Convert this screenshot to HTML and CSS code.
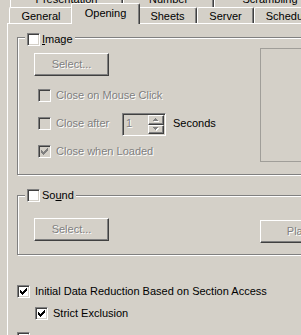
FILE: index.html
```html
<!DOCTYPE html>
<html>
<head>
<meta charset="utf-8">
<title>Document Properties</title>
<link rel="stylesheet" href="styles.css">
</head>
<body>
<div class="dialog">
  <div class="tabs tabs-back">
    <div class="tab tab-presentation">Presentation</div>
    <div class="tab tab-number">Number</div>
    <div class="tab tab-scrambling">Scrambling</div>
  </div>
  <div class="tabs tabs-front">
    <div class="tab tab-general">General</div>
    <div class="tab tab-opening selected">Opening</div>
    <div class="tab tab-sheets">Sheets</div>
    <div class="tab tab-server">Server</div>
    <div class="tab tab-scheduler">Scheduler</div>
  </div>
  <div class="panel">
    <fieldset class="group group-image">
      <legend class="group-title title-low"><span class="cb"></span><span class="title-text"><u>I</u>mage</span></legend>
      <div class="group-body">
        <div class="col">
          <div class="btn btn-select"><span class="dim">Select...</span></div>
          <div class="row"><span class="cb disabled"></span><span class="row-label dim">Close on Mouse Click</span></div>
          <div class="row">
            <span class="cb disabled"></span><span class="row-label dim label-fixed">Close after</span>
            <div class="spin">
              <span class="spin-value dim">1</span>
              <span class="spin-arrows">
                <span class="spin-btn spin-up"><svg width="6" height="4" viewBox="0 0 6 4"><path fill="#fff" d="M3 1h1v1H3zM2 2h3v1H2zM1 3h5v1H1z"/><path fill="#808080" d="M2 0h1v1H2zM1 1h3v1H1zM0 2h5v1H0z"/></svg></span>
                <span class="spin-btn spin-down"><svg width="6" height="4" viewBox="0 0 6 4"><path fill="#fff" d="M1 1h5v1H1zM2 2h3v1H2zM3 3h1v1H3z"/><path fill="#808080" d="M0 0h5v1H0zM1 1h3v1H1zM2 2h1v1H2z"/></svg></span>
              </span>
            </div>
            <span class="seconds">Seconds</span>
          </div>
          <div class="row"><span class="cb disabled"><svg class="check" width="11" height="11" viewBox="0 0 11 11"><path d="M2 4h1v3H2zM3 5h1v3H3zM4 6h1v3H4zM5 5h1v3H5zM6 4h1v3H6zM7 3h1v3H7zM8 2h1v3H8z"/></svg></span><span class="row-label dim">Close when Loaded</span></div>
        </div>
        <div class="preview"></div>
      </div>
    </fieldset>

    <fieldset class="group group-sound">
      <legend class="group-title title-mid"><span class="cb"></span><span class="title-text">So<u>u</u>nd</span></legend>
      <div class="group-body">
        <div class="col">
          <div class="btn btn-select"><span class="dim">Select...</span></div>
        </div>
        <div class="btn btn-play"><span class="dim">Play</span></div>
      </div>
    </fieldset>

    <div class="options">
      <div class="opt opt-initial"><span class="cb"><svg class="check" width="11" height="11" viewBox="0 0 11 11"><path d="M2 4h1v3H2zM3 5h1v3H3zM4 6h1v3H4zM5 5h1v3H5zM6 4h1v3H6zM7 3h1v3H7zM8 2h1v3H8z"/></svg></span><span class="opt-label">Initial Data Reduction Based on Section Access</span></div>
      <div class="opt opt-strict"><span class="cb"><svg class="check" width="11" height="11" viewBox="0 0 11 11"><path d="M2 4h1v3H2zM3 5h1v3H3zM4 6h1v3H4zM5 5h1v3H5zM6 4h1v3H6zM7 3h1v3H7zM8 2h1v3H8z"/></svg></span><span class="opt-label">Strict Exclusion</span></div>
      <div class="opt opt-next"><span class="cb"></span></div>
    </div>
  </div>
</div>
</body>
</html>
```

FILE: styles.css
```css
html, body {
  margin: 0;
  padding: 0;
  overflow: hidden;
  background: #d4d0c8;
}

body {
  font-family: "Liberation Sans", Arial, sans-serif;
  font-size: 11px;
  line-height: 13px;
  color: #000;
}

.dialog {
  width: 301px;
  height: 335px;
  overflow: hidden;
}

/* ---------- tabs ---------- */
.tabs {
  display: flex;
  align-items: flex-start;
}

.tab {
  flex: none;
  box-sizing: border-box;
  text-align: center;
  white-space: nowrap;
  background: #d4d0c8;
  border-left: 1px solid #fff;
  border-right: 1px solid #404040;
  box-shadow: inset -1px 0 #808080;
}

.tabs-back {
  height: 7px;
  overflow: hidden;
  padding-left: 10px;
}

.tabs-back .tab {
  height: 20px;
  margin-top: -13px;
  padding-top: 6px;
}

.tab-presentation { width: 113px; }
.tab-number { width: 91px; }
.tab-scrambling { width: 112px; }

.tabs-front {
  height: 16px;
  padding-left: 9px;
  position: relative;
  z-index: 1;
}

.tabs-front .tab {
  height: 16px;
  padding-top: 2px;
  border-top: 1px solid #fff;
  border-radius: 2px 2px 0 0;
}

.tab-general { width: 64px; }
.tab-sheets { width: 59px; }
.tab-server { width: 57px; }
.tab-scheduler { width: 73px; }

.tabs-front .tab.selected {
  width: 69px;
  height: 21px;
  margin: -4px -2px 0;
  padding-top: 3px;
  position: relative;
  z-index: 2;
}

/* ---------- panel ---------- */
.panel {
  margin-left: 7px;
  width: 330px;
  height: 400px;
  border-top: 1px solid #fff;
  border-left: 1px solid #fff;
  padding: 5px 0 0 9px;
}

/* ---------- group boxes ---------- */
.group {
  margin: 0;
  padding: 0;
  min-width: 0;
  width: 310px;
  box-sizing: border-box;
  border: 1px solid #808080;
  box-shadow: inset 1px 1px #fff, 1px 1px #fff;
}

.group-image { height: 146px; }
.group-sound { height: 68px; margin-top: 12px; }

.group-title {
  display: flex;
  height: 17px;
  box-sizing: border-box;
  margin-left: 7px;
  padding: 0 1px 0 2px;
  background: #d4d0c8;
}

.title-low { align-items: flex-end; }
.title-mid { align-items: center; }

.title-text {
  margin-left: 2px;
  margin-right: 1px;
}

.group-body {
  display: flex;
  align-items: flex-start;
}

.col {
  width: 242px;
  flex: none;
  display: flex;
  flex-direction: column;
  gap: 5px;
}

.group-image .col { padding-top: 7px; }
.group-sound .col { padding-top: 14px; }

.preview {
  flex: none;
  width: 60px;
  height: 114px;
  margin-top: 2px;
  box-sizing: border-box;
  border: 1px solid #a09e99;
}

/* ---------- buttons ---------- */
.btn {
  width: 75px;
  height: 23px;
  box-sizing: border-box;
  display: flex;
  align-items: center;
  justify-content: center;
  border: 1px solid;
  border-color: #fff #404040 #404040 #fff;
  box-shadow: inset -1px -1px #808080;
}

.btn-select {
  margin-left: 16px;
  margin-bottom: 3px;
}

.btn-play {
  flex: none;
  margin-top: 16px;
}

.dim {
  color: #808080;
  text-shadow: 1px 1px 0 #fff;
}

/* ---------- checkboxes ---------- */
.cb {
  flex: none;
  display: block;
  width: 13px;
  height: 13px;
  box-sizing: border-box;
  border: 1px solid;
  border-color: #808080 #fff #fff #808080;
  box-shadow: inset 1px 1px #404040, inset -1px -1px #d4d0c8;
  background: #fff;
}

.cb.disabled { background: #d4d0c8; }

.check {
  display: block;
  fill: #000;
}

.cb.disabled .check { fill: #808080; }

.row {
  display: flex;
  align-items: center;
  height: 23px;
  padding-left: 20px;
}

.row-label { margin-left: 5px; white-space: nowrap; }

.label-fixed { width: 66px; flex: none; }

/* ---------- spinner ---------- */
.spin {
  flex: none;
  width: 44px;
  height: 23px;
  margin-top: 2px;
  box-sizing: border-box;
  display: flex;
  padding: 1px;
  border: 1px solid;
  border-color: #808080 #fff #fff #808080;
  box-shadow: inset 1px 1px #404040;
  background: #d4d0c8;
}

.spin-value {
  flex: 1;
  padding: 2px 0 0 2px;
}

.spin-arrows {
  width: 16px;
  display: flex;
  flex-direction: column;
}

.spin-btn {
  flex: 1;
  box-sizing: border-box;
  display: flex;
  align-items: center;
  justify-content: center;
  border: 1px solid;
  border-color: #fff #404040 #404040 #fff;
  box-shadow: inset -1px -1px #808080;
}

.spin-btn svg { display: block; }

.seconds { margin-left: 7px; }

/* ---------- bottom options ---------- */
.options {
  display: flex;
  flex-direction: column;
}

.opt {
  display: flex;
  align-items: center;
  height: 13px;
}

.opt-initial { margin-top: 30px; }
.opt-strict { margin-top: 9px; padding-left: 18px; }
.opt-next { margin-top: 12px; }

.opt-label {
  margin-left: 5px;
  white-space: nowrap;
}
```
